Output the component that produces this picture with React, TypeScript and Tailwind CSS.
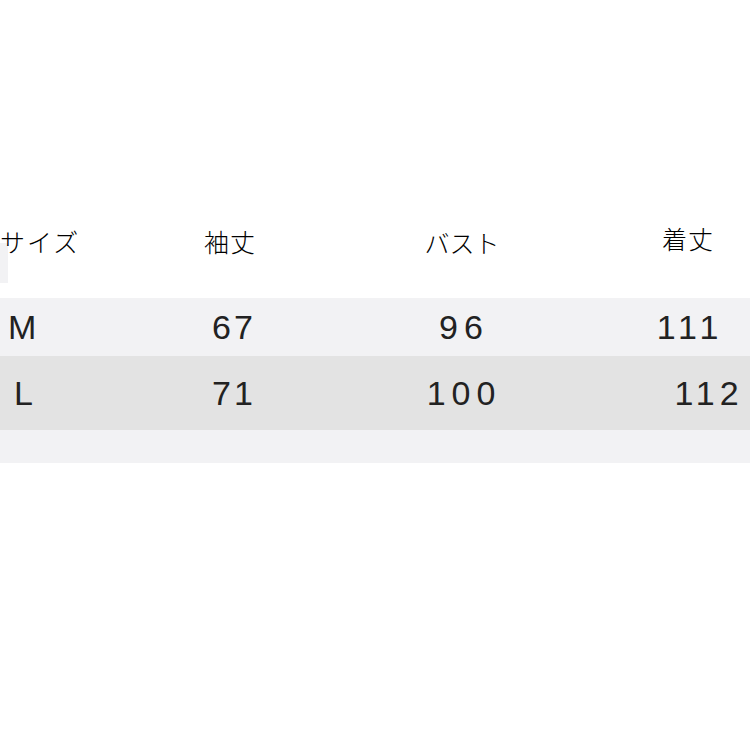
const rows = [
  { size: "M", sleeve: "67", bust: "96", length: "111", bg: "bg-[#f2f2f4]", h: "h-[58px]", sizePad: "pl-[8px]", lenPad: "pl-[40px]" },
  { size: "L", sleeve: "71", bust: "100", length: "112", bg: "bg-[#e3e3e3]", h: "h-[74px]", sizePad: "pl-[14px]", lenPad: "pl-[78px]" },
];

const cols = "grid grid-cols-[130px_200px_260px_160px]";

export default function App() {
  return (
    <div className="w-[750px] h-[750px] bg-white pt-[222px] overflow-hidden">
      {/* header */}
      <div
        className={`${cols} h-[76px] text-[25px] leading-[25px] font-light text-black`}
        style={{ fontFamily: '"Noto Sans CJK JP", "Noto Sans", sans-serif' }}
      >
        <div className="relative pt-[7px]">
          <div className="absolute left-0 top-[21px] w-[8px] h-[40px] bg-[#f2f2f4]" />
          <span className="relative tracking-[2px]">サイズ</span>
        </div>
        <div className="pt-[7px] text-center tracking-[1px]">袖丈</div>
        <div className="pt-[8px] pl-[4px] text-center tracking-[0px]">バスト</div>
        <div className="pt-[4px] pl-[36px] text-center tracking-[1px]">着丈</div>
      </div>

      {rows.map((r) => (
        <div
          key={r.size}
          className={`${r.h} ${r.bg} ${cols} items-center text-[34px] leading-none text-[#222]`}
          style={{ fontFamily: '"Liberation Sans", Arial, sans-serif' }}
        >
          <div className={r.sizePad}>{r.size}</div>
          <div className="pl-[8px] text-center tracking-[3px]">{r.sleeve}</div>
          <div className="pl-[8px] text-center tracking-[6px]">{r.bust}</div>
          <div className={`${r.lenPad} text-center tracking-[5px]`}>{r.length}</div>
        </div>
      ))}

      <div className="h-[33px] bg-[#f2f2f4]" />
    </div>
  );
}
